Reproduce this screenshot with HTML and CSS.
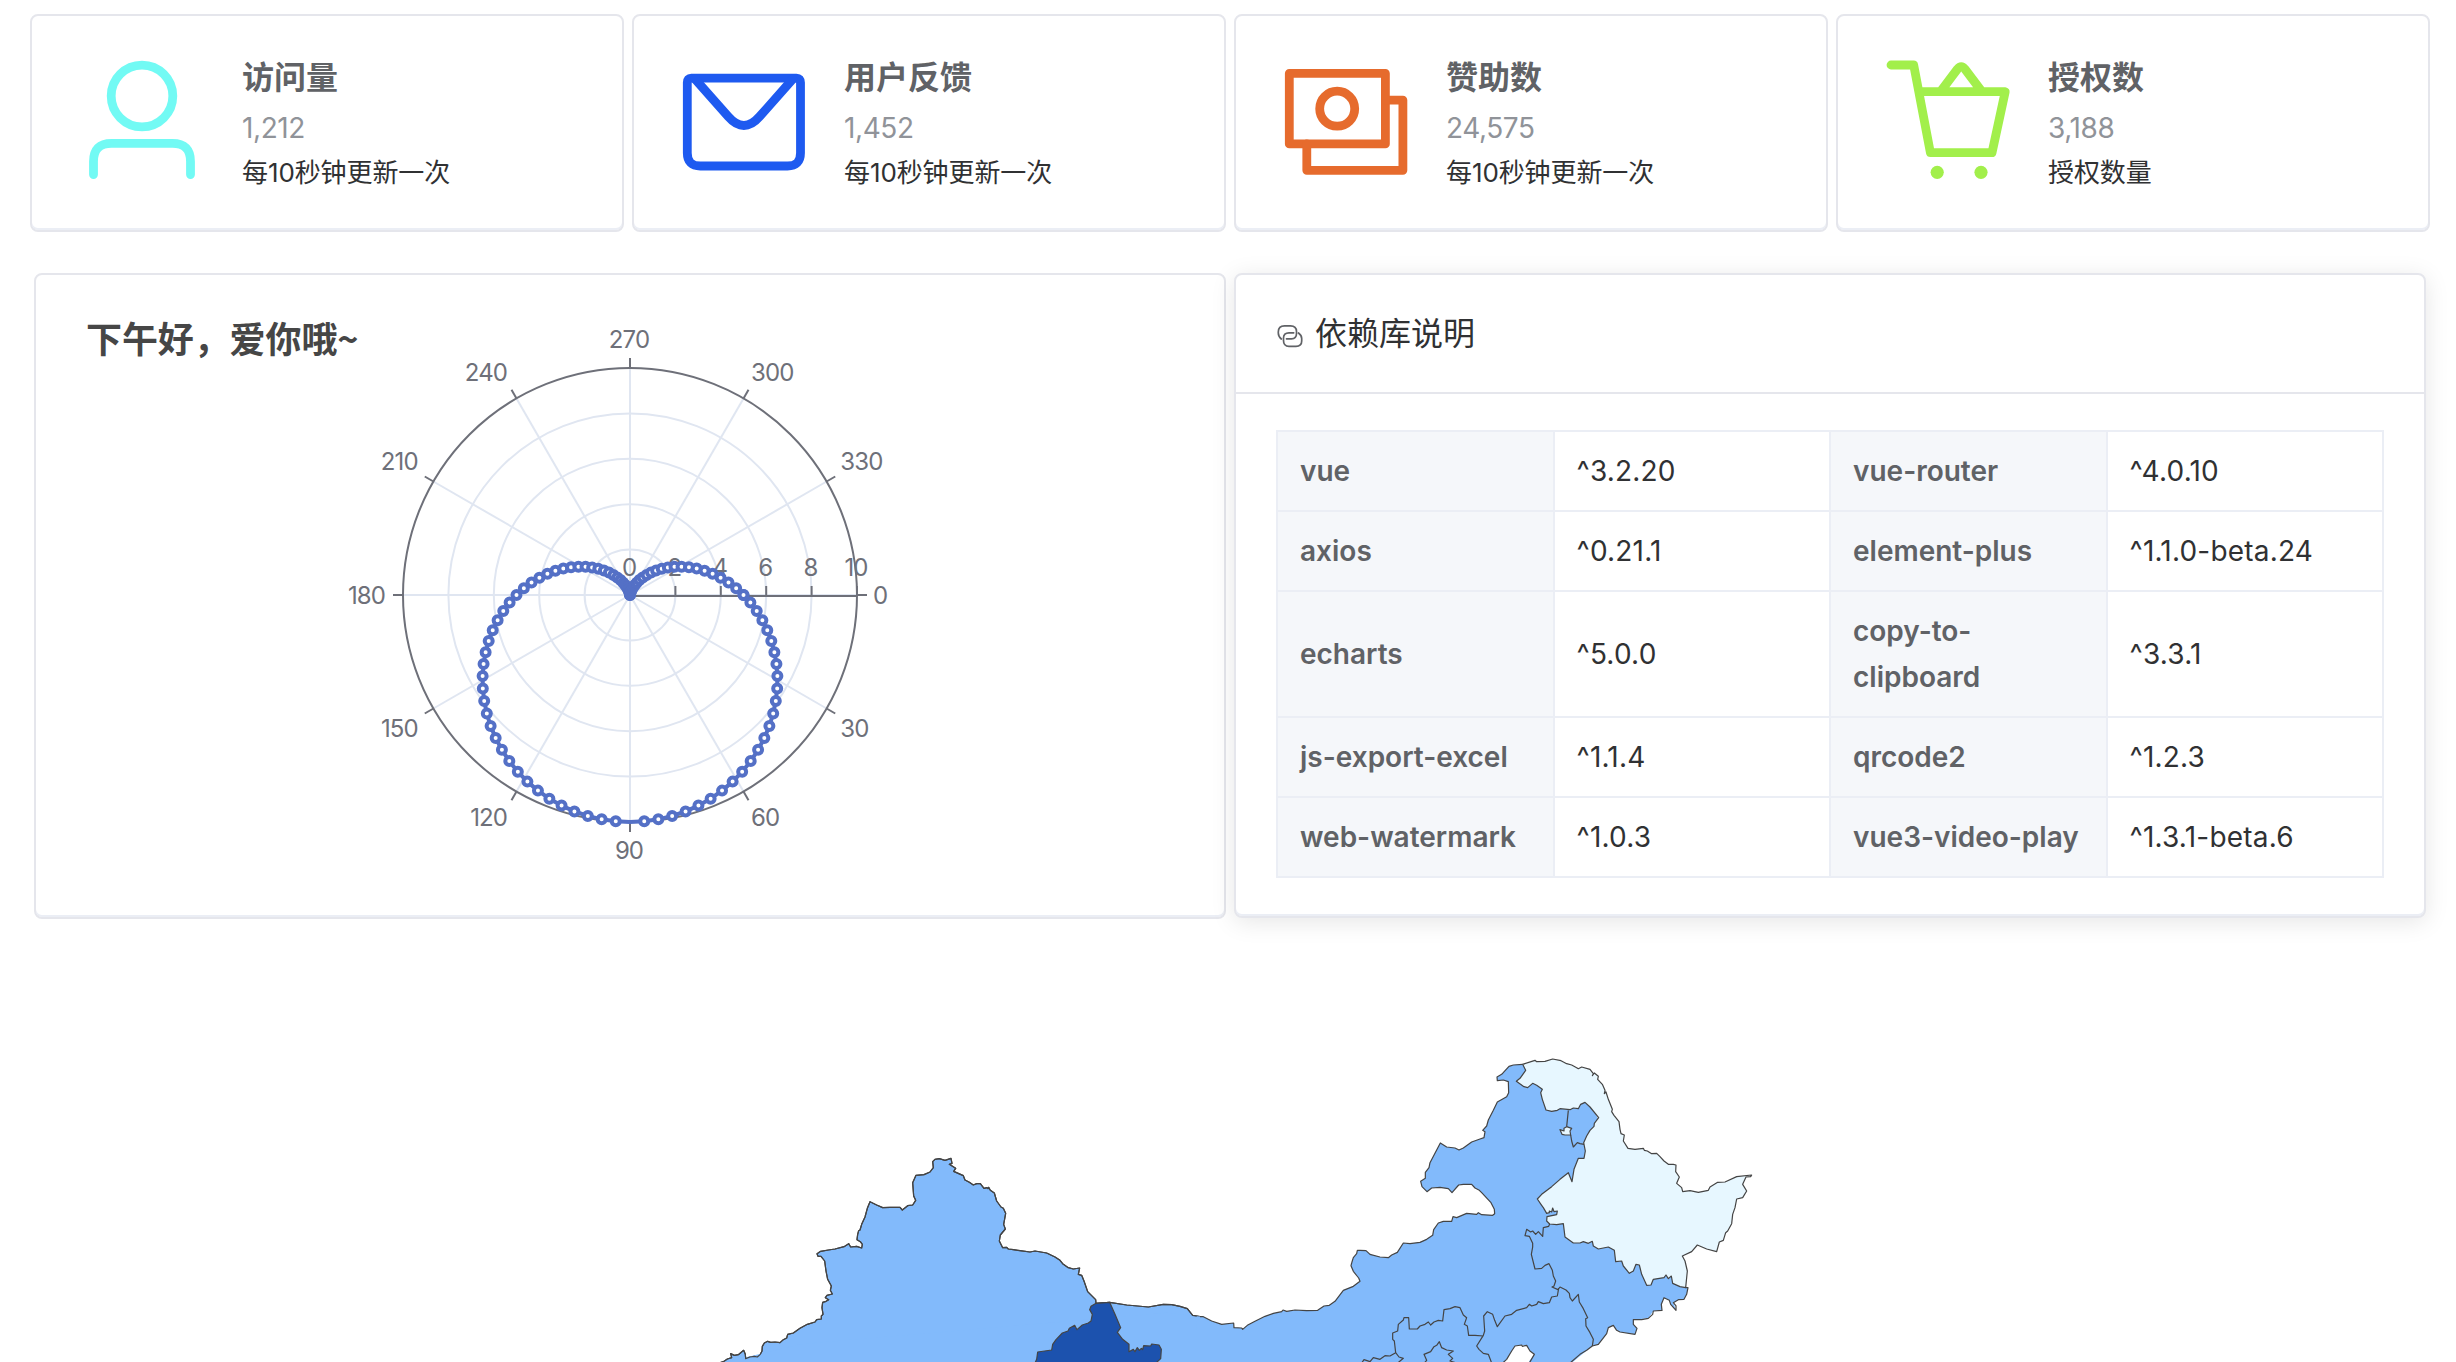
FILE: index.html
```
<!DOCTYPE html>
<html lang="zh-CN">
<head>
<meta charset="utf-8">
<title>首页</title>
<link rel="stylesheet" href="styles.css">
</head>
<body>
<main class="page">
  <section class="stats">
    <article class="card stat">
      <svg class="stat-icon cyan" viewBox="0 0 140 140"><circle cx="70" cy="46" r="30.8"/><path d="M21.500 124.600V111.500Q21.500 93.400 39.500 93.400H100.500Q118.500 93.400 118.500 111.500V124.600"/></svg>
      <div class="stat-body"><h3>访问量</h3><p class="num">1,212</p><p class="note">每10秒钟更新一次</p></div>
    </article>
    <article class="card stat">
      <svg class="stat-icon blue" viewBox="0 0 140 140"><path d="M17.300 28.100H122.500Q126.500 28.100 126.500 32.500V103Q126.500 116 113.500 116H26.300Q13.300 116 13.300 103V32.500Q13.300 28.100 17.300 28.100Z"/><path d="M21 29L54.200 66.500Q69.900 84.500 85.600 66.500L118.800 29"/></svg>
      <div class="stat-body"><h3>用户反馈</h3><p class="num">1,452</p><p class="note">每10秒钟更新一次</p></div>
    </article>
    <article class="card stat">
      <svg class="stat-icon orange" viewBox="0 0 140 140"><rect x="13.300" y="23.400" width="96.100" height="70.500"/><circle cx="61.200" cy="58.700" r="17.500"/><path d="M30.800 94V120.300H126.900V50.100H109.400"/></svg>
      <div class="stat-body"><h3>赞助数</h3><p class="num">24,575</p><p class="note">每10秒钟更新一次</p></div>
    </article>
    <article class="card stat">
      <svg class="stat-icon green" viewBox="0 0 140 140"><path d="M13 15H35.700L52.400 102.700H114L127.200 41.700H41M63.700 40L79.500 19Q83.200 14.500 86.900 19L102.700 40"/><circle class="wheel" cx="59.200" cy="122.300" r="6.600"/><circle class="wheel" cx="103" cy="122.300" r="6.600"/></svg>
      <div class="stat-body"><h3>授权数</h3><p class="num">3,188</p><p class="note">授权数量</p></div>
    </article>
  </section>

  <section class="panels">
    <article class="card chart-card">
      <svg class="polar" id="polar" viewBox="36 274 1188 640">
        <text class="chart-title" x="86" y="351.500">下午好，爱你哦~</text>
      </svg>
    </article>
    <article class="card deps">
      <header class="deps-head">
        <svg class="link-icon" viewBox="0 0 26 26"><path d="M4.300 16C2.500 14.500 1.300 12.500 1.300 10V9Q1.300 2.800 7.500 2.800H13.500Q19.500 2.800 19.500 8.500V10.500Q19.500 15.800 14.500 15.800H9.500M16.700 9.800H12Q6.500 9.800 6.500 15V17.500Q6.500 23.300 12 23.300H19Q24.700 23.300 24.700 18V15.500C24.700 13 23.500 11.500 21.500 10"/></svg>
        <span>依赖库说明</span>
      </header>
      <table class="deps-table">
        <tr><th>vue</th><td>^3.2.20</td><th>vue-router</th><td>^4.0.10</td></tr>
        <tr><th>axios</th><td>^0.21.1</td><th>element-plus</th><td>^1.1.0-beta.24</td></tr>
        <tr><th>echarts</th><td>^5.0.0</td><th>copy-to-<br>clipboard</th><td>^3.3.1</td></tr>
        <tr><th>js-export-excel</th><td>^1.1.4</td><th>qrcode2</th><td>^1.2.3</td></tr>
        <tr><th>web-watermark</th><td>^1.0.3</td><th>vue3-video-play</th><td>^1.3.1-beta.6</td></tr>
      </table>
    </article>
  </section>

  <svg class="map" viewBox="0 1000 2456 362">
    <defs>
      <path id="west" d="M57 696L70 692 82 684 95 680 92 668 103 673 115 671 131 658 136 670 137 683 150 678 163 676 172 678 181 670 186 660 187 646 193 636 203 631 212 634 225 633 240 635 250 626 260 621 263 610 280 606 300 592 322 580 345 573 350 566 364 564 364 555 369 550 366 530 368 514 378 511 386 506 376 500 381 493 397 489 391 478 394 465 383 445 378 420 374 390 363 376 354 376 351 368 362 361 385 357 405 354 432 347 446 338 452 348 470 346 485 351 487 340 481 332 471 326 473 310 476 299 480 297 485 280 495 258 502 232 510 212 530 222 548 230 570 229 600 229 607 237 623 224 638 222 647 208 641 195 638 155 648 133 672 131 690 123 700 110 698 92 705 85 718 83 735 88 753 82 756 97 748 100 767 112 761 121 790 134 795 147 808 154 820 162 830 158 841 158 852 172 861 170 864 173 866 169 871 178 883 186 890 210 903 228 910 232 917 247 911 280 916 294 901 312 898 330 908 350 920 349 925 354 940 356 960 359 990 363 1005 360 1040 366 1065 378 1080 388 1088 398 1105 410 1120 414 1139 411 1135 430 1145 433 1152 450 1163 482 1187 506 1188 517 1229 514 1280 522 1345 528 1390 520 1415 521 1440 526 1462 533 1478 553 1500 557"/>
      <path id="north" d="M180 161L190 161 215 174 245 184 281 180 282 194 305 195 308 199 322 187 345 175 375 160 400 151 425 146 429 141 440 145 465 141 500 143 533 142 552 129 568 127 585 115 610 82 640 70 660 55 656 45 640 25 633 8 635 0"/>
      <path id="heilongjiang" d="M488 70L525 58 530 62 555 61 578 54 603 59 620 68 635 72 650 80 655 83 665 78 690 85 700 98 697 104 703 96 715 106 713 115 727 130 735 148 733 158 738 153 745 175 757 205 755 212 762 223 777 242 780 265 783 278 793 282 790 300 804 322 825 325 850 322 853 328 862 330 875 338 890 337 900 347 912 360 925 370 940 370 948 372 947 392 958 408 950 427 965 440 968 452 990 449 1015 454 1045 448 1050 438 1073 424 1095 423 1130 407 1175 402 1172 407 1158 408 1148 430 1160 450 1148 470 1130 474 1125 500 1118 520 1115 548 1103 570 1097 575 1090 598 1078 603 1070 632 1040 624 1012 612 995 632 967 645 975 660 982 690 977 740 960 737 938 727 934 705 925 713 918 702 912 710 880 715 873 732 860 733 845 700 838 672 828 670 820 690 808 697 790 675 785 660 767 662 763 628 745 618 715 624 700 615 697 601 685 607 670 602 660 606 640 606 615 588 610 548 590 551 569 549 560 540 561 527 590 521 592 510 582 512 578 501 575 513 568 510 568 515 560 517 550 500 545 493 532 474 545 460 575 437 600 415 625 395 636 422 642 385 655 352 672 352 676 330 671 305 680 285 690 268 702 256 703 247 716 230 690 198 675 184 662 190 655 203 640 201 630 206 600 203 592 208 575 211 558 207 547 175 542 155 547 145 530 133 518 127 503 140 492 137 469 121 480 112 497 88Z"/>
      <path id="gansu" d="M1005 696L1010 685 1013 663 1055 657 1058 640 1068 626 1087 606 1104 600 1108 592 1124 583 1131 596 1147 582 1165 576 1173 570 1177 550 1169 536 1173 526 1188 517 1229 514 1245 550 1262 590 1252 604 1268 625 1287 640 1287 662 1300 655 1305 662 1312 650 1318 658 1324 652 1328 656 1331 644 1352 645 1355 639 1377 642 1384 655 1382 683 1368 696"/>
    </defs>
    <g transform="translate(700 1130) scale(.333333)">
      <use href="#west" class="outline land"/>
      <path class="base" d="M57 698L300 640 1400 545 1500 557V720H57Z"/>
      <use href="#west" class="outline"/>
      <use href="#gansu" class="outline deep"/>
    </g>
    <g transform="translate(1140 1262) scale(.333333)">
      <path class="base" d="M170 160L190 161 215 174 245 184 281 180 282 194 305 195 308 199 322 187 345 175 375 160 400 151 425 146 429 141 440 145 465 141 500 143 533 142 552 129 568 127 585 115 610 82 640 70 660 55 680 55V310H170Z"/>
    </g>
    <g transform="translate(1360 1040) scale(.333333)">
      <path class="base" d="M0 721L-4 711 -20 691 -27 674 -25 666 -20 650 -10 638 -8 628 0 628 18 629 30 640 60 648 85 650 95 642 112 634 130 606 150 608 180 604 200 595 218 583 221 566 235 546 250 541 275 541 279 527 290 530 320 517 350 520 355 515 365 521 398 523 404 518 403 505 393 485 365 455 358 448 345 441 335 430 310 430 296 432 276 455 265 443 240 439 215 441 201 452 186 437 182 421 196 412 196 394 207 380 210 365 241 306 260 318 285 321 297 327 310 321 335 303 360 294 372 290 375 272 368 268 380 255 385 237 400 208 412 183 440 167 446 155 445 122 430 117 412 119 411 108 425 100 447 76 460 72 488 70 700 200 860 600 977 740 984 740 980 760 972 775 955 776 940 785 948 808 932 790 928 778 912 770 904 790 906 808 880 810 865 832 820 836 820 850 831 862 825 880 780 873 770 868 760 853 745 860 740 878 715 910 697 915 660 945 630 970 508 970 508 960 523 940 510 930 500 913 485 912 465 915 455 930 440 955 428 970 0 970Z"/>
      <use href="#heilongjiang" class="outline pale"/>
      <path class="outline" d="M-25 666L-20 650 -10 638 -8 628 0 628 18 629 30 640 60 648 85 650 95 642 112 634 130 606 150 608 180 604 200 595 218 583 221 566 235 546 250 541 275 541 279 527 290 530 320 517 350 520 355 515 365 521 398 523 404 518 403 505 393 485 365 455 358 448 345 441 335 430 310 430 296 432 276 455 265 443 240 439 215 441 201 452 186 437 182 421 196 412 196 394 207 380 210 365 241 306 260 318 285 321 297 327 310 321 335 303 360 294 372 290 375 272 368 268 380 255 385 237 400 208 412 183 440 167 446 155 445 122 430 117 412 119 411 108 425 100 447 76 460 72 488 70"/>
      <path class="outline" d="M977 740L984 740 980 760 972 775 955 776 940 785 948 795 948 808 932 790 928 778 912 770 904 790 906 808 880 810 878 820 865 832 845 836 820 836 820 850 831 862 825 880 780 873 770 868 760 853 745 860 740 878 715 910 697 915 680 928 660 940 630 966M428 966L440 955 455 930 465 915 485 912 487 916 500 913 510 930 523 940 508 966"/>
      <path class="outline" d="M569 549L566 556 550 560 548 586 535 572 527 580 518 570 512 573 500 565 495 584 508 586 518 607 518 618 514 640 525 684 545 682 555 673 567 668 577 688 580 705 587 720 582 735 576 738 594 746 600 738 618 747 628 757 630 770 637 780 655 760 658 783 670 803 683 830 677 833 678 855 690 875 700 895 697 915M596 742L592 765 575 768 568 785 550 788 535 782 530 790 515 795 508 790 500 800 470 808 455 820 435 825 412 857 404 838 398 820 382 812 371 825 374 870 370 883 350 915 357 925 370 937 385 940 395 966M370 885L345 883 326 883 322 855 313 850 320 830 310 822 300 800 285 797 270 803 252 806 248 840 235 838 222 843 212 852 205 843 195 850 180 855 172 864 148 864 146 830 132 830 130 837 115 850 113 870 98 876 98 895 103 900 107 935 117 948 130 952 113 966M107 935L90 945 75 944 60 955 40 950 30 962 12 956 5 966M193 966L200 958 192 940 212 932 222 917 230 913 238 902 245 920 260 927 280 930 265 940 278 952 270 960 290 966"/>
      <path class="outline" d="M625 208L620 257M632 282L635 300 640 318 652 305 660 308 672 310"/>
      <path class="outline pale" d="M620 257L635 262 630 270 632 282 615 282 606 280 600 266 612 270 612 262Z"/>
    </g>
    <g transform="translate(1140 1262) scale(.333333)"><use href="#north" class="outline"/></g>
  </svg>
</main>
<script src="chart.js"></script>
</body>
</html>
```
FILE: styles.css
```
* { box-sizing: border-box; }
body {
  margin: 0;
  background: #fff;
  color: #303133;
  font-family: Inter, "Noto Sans CJK SC", sans-serif;
}
.page {
  height: 1362px;
  overflow: hidden;
  padding-top: 14px;
}
.card {
  background: #fff;
  border: 2px solid #e5e6ec;
  border-radius: 8px;
}
.stats {
  display: grid;
  grid-template-columns: repeat(4, 594px);
  gap: 8px;
  padding-left: 30px;
}
.stat {
  display: flex;
  gap: 30px;
  height: 218px;
  padding: 34px 0 0 40px;
  box-shadow: inset 0 -2px #ebeef5;
}
.stat-icon {
  flex: none;
  width: 140px;
  height: 140px;
  fill: none;
  stroke: currentColor;
  stroke-width: 8.8;
  stroke-linecap: round;
  stroke-linejoin: round;
}
.wheel { fill: currentColor; stroke: none; }
.cyan { color: #72faf4; }
.blue { color: #1e5af0; }
.orange { color: #e66b2d; }
.green { color: #a2ef4b; }
.stat-body h3, .stat-body p { margin: 0; white-space: nowrap; }
.stat-body h3 {
  color: #606266;
  font: 600 32px/50px "Noto Sans CJK SC", sans-serif;
}
.num {
  color: #909399;
  font-size: 28px;
  line-height: 56px;
  letter-spacing: -.4px;
}
.note {
  font-size: 26px;
  line-height: 34px;
  letter-spacing: -.1px;
}
.panels {
  display: grid;
  grid-template-columns: 1192px 1192px;
  gap: 8px;
  margin-top: 41px;
  padding-left: 34px;
}
.chart-card { height: 646px; box-shadow: inset 0 -2px #ebeef5; }
.polar { display: block; width: 1188px; height: 640px; }
.chart-title {
  fill: #464646;
  font: 700 36px "Noto Sans CJK SC", sans-serif;
  letter-spacing: -.1px;
}
.grid { fill: none; stroke: #e0e6f1; stroke-width: 2; }
.axis { fill: none; stroke: #6e7079; stroke-width: 2; }
.label { fill: #6e7079; font-size: 24px; letter-spacing: -.9px; }
.middle { text-anchor: middle; }
.end { text-anchor: end; }
.curve { fill: none; stroke: #5470c6; stroke-width: 4; stroke-linejoin: bevel; }
.dot { fill: #fff; stroke: #5470c6; stroke-width: 4; }
.deps {
  height: 645px;
  box-shadow: 0 4px 24px rgba(0, 0, 0, .1), inset 0 -2px #ebeef5;
}
.deps-head {
  display: flex;
  align-items: center;
  gap: 12px;
  height: 119px;
  padding: 0 0 5px 41px;
  border-bottom: 2px solid #e5e6ec;
  font-size: 32px;
}
.link-icon {
  width: 26px;
  height: 26px;
  margin-top: 9px;
  fill: none;
  stroke: #606266;
  stroke-width: 1.7;
  stroke-linecap: round;
}
.deps-table {
  width: 1108px;
  margin: 36px 0 0 40px;
  border-collapse: collapse;
  table-layout: fixed;
  font-size: 28px;
  line-height: 46px;
}
.deps-table th, .deps-table td {
  padding: 16px 22px;
  border: 2px solid #ebeef5;
  text-align: left;
  font-weight: 400;
  letter-spacing: .2px;
  white-space: nowrap;
}
.deps-table th { background: #f5f7fa; color: #606266; font-weight: 600; letter-spacing: 0; }
.map { display: block; width: 2456px; height: 362px; margin-top: 82px; }
.outline { fill: none; stroke: #444; stroke-width: 3.6; stroke-linejoin: round; }
.base, .land { fill: #82bafb; }
.pale { fill: #e7f7ff; }
.deep { fill: #1c52ae; }
```
FILE: chart.js
```
const svg = document.getElementById('polar');
const CX = 630, CY = 594, R = 227;

function add(tag, cls, attrs, text) {
  const el = document.createElementNS('http://www.w3.org/2000/svg', tag);
  el.setAttribute('class', cls);
  for (const k in attrs) el.setAttribute(k, attrs[k]);
  if (text !== undefined) el.textContent = text;
  svg.appendChild(el);
}
const at = (deg, r) => {
  const a = deg * Math.PI / 180;
  return [CX + r * Math.cos(a), CY + r * Math.sin(a)];
};
const line = (cls, p, q) => add('line', cls, { x1: p[0], y1: p[1], x2: q[0], y2: q[1] });

for (let v = 2; v < 10; v += 2) add('circle', 'grid', { cx: CX, cy: CY, r: R * v / 10 });
for (let d = 0; d < 360; d += 30) line('grid', [CX, CY], at(d, R));
add('circle', 'axis', { cx: CX, cy: CY, r: R });
for (let d = 0; d < 360; d += 30) {
  line('axis', at(d, R), at(d, R + 10));
  const [x, y] = at(d, R + 17);
  const dx = x - CX;
  const side = Math.abs(dx) < 1 ? 'middle' : dx < 0 ? 'end' : '';
  const shift = Math.abs(y - CY) < 1 ? 0 : Math.sign(y - CY) * 11.5;
  add('text', 'label ' + side, { x: x - 1, y: y + shift + 8.5 }, d);
}
line('axis', [CX, 595], [CX + R, 595]);
for (let v = 0; v <= 10; v += 2) {
  const x = CX + R * v / 10;
  if (v) line('axis', [x, 595], [x, 585]);
  add('text', 'label middle', { x: x - 1, y: 575 }, v);
}

const points = [];
for (let i = 0; i <= 100; i++) {
  const d = i * 3.6;
  points.push(at(d, R / 2 * (1 + Math.sin(d * Math.PI / 180))));
}
add('polyline', 'curve', { points: points.map(p => p.join()).join(' ') });
points.forEach((p, i) => {
  if (i !== 25) add('circle', 'dot', { cx: p[0], cy: p[1], r: 4 });
});
```
